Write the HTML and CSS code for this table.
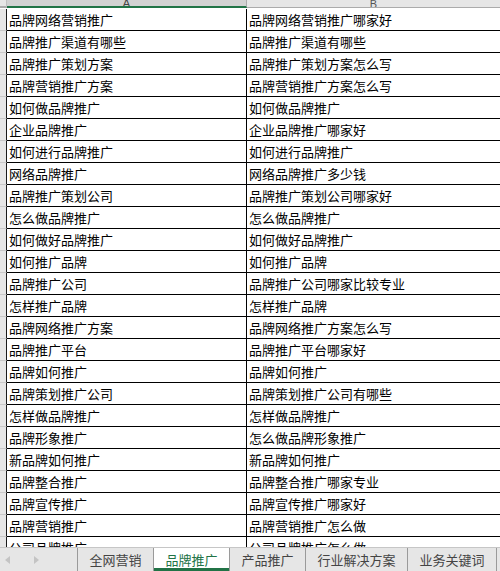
FILE: index.html
```html
<!DOCTYPE html>
<html lang="zh">
<head>
<meta charset="utf-8">
<title>品牌推广</title>
<link rel="stylesheet" href="styles.css">
</head>
<body>
<div class="sheet">
  <div class="colhead">
    <div class="corner"></div>
    <div class="ch ch-a"><span>A</span></div>
    <div class="ch ch-b"><span>B</span></div>
  </div>
  <div class="grid">
    <div class="row"><div class="rh"></div><div class="cell a">品牌网络营销推广</div><div class="cell b">品牌网络营销推广哪家好</div></div>
    <div class="row"><div class="rh"></div><div class="cell a">品牌推广渠道有哪些</div><div class="cell b">品牌推广渠道有哪些</div></div>
    <div class="row"><div class="rh"></div><div class="cell a">品牌推广策划方案</div><div class="cell b">品牌推广策划方案怎么写</div></div>
    <div class="row"><div class="rh"></div><div class="cell a">品牌营销推广方案</div><div class="cell b">品牌营销推广方案怎么写</div></div>
    <div class="row"><div class="rh"></div><div class="cell a">如何做品牌推广</div><div class="cell b">如何做品牌推广</div></div>
    <div class="row"><div class="rh"></div><div class="cell a">企业品牌推广</div><div class="cell b">企业品牌推广哪家好</div></div>
    <div class="row"><div class="rh"></div><div class="cell a">如何进行品牌推广</div><div class="cell b">如何进行品牌推广</div></div>
    <div class="row"><div class="rh"></div><div class="cell a">网络品牌推广</div><div class="cell b">网络品牌推广多少钱</div></div>
    <div class="row"><div class="rh"></div><div class="cell a">品牌推广策划公司</div><div class="cell b">品牌推广策划公司哪家好</div></div>
    <div class="row"><div class="rh"></div><div class="cell a">怎么做品牌推广</div><div class="cell b">怎么做品牌推广</div></div>
    <div class="row"><div class="rh"></div><div class="cell a">如何做好品牌推广</div><div class="cell b">如何做好品牌推广</div></div>
    <div class="row"><div class="rh"></div><div class="cell a">如何推广品牌</div><div class="cell b">如何推广品牌</div></div>
    <div class="row"><div class="rh"></div><div class="cell a">品牌推广公司</div><div class="cell b">品牌推广公司哪家比较专业</div></div>
    <div class="row"><div class="rh"></div><div class="cell a">怎样推广品牌</div><div class="cell b">怎样推广品牌</div></div>
    <div class="row"><div class="rh"></div><div class="cell a">品牌网络推广方案</div><div class="cell b">品牌网络推广方案怎么写</div></div>
    <div class="row"><div class="rh"></div><div class="cell a">品牌推广平台</div><div class="cell b">品牌推广平台哪家好</div></div>
    <div class="row"><div class="rh"></div><div class="cell a">品牌如何推广</div><div class="cell b">品牌如何推广</div></div>
    <div class="row"><div class="rh"></div><div class="cell a">品牌策划推广公司</div><div class="cell b">品牌策划推广公司有哪些</div></div>
    <div class="row"><div class="rh"></div><div class="cell a">怎样做品牌推广</div><div class="cell b">怎样做品牌推广</div></div>
    <div class="row"><div class="rh"></div><div class="cell a">品牌形象推广</div><div class="cell b">怎么做品牌形象推广</div></div>
    <div class="row"><div class="rh"></div><div class="cell a">新品牌如何推广</div><div class="cell b">新品牌如何推广</div></div>
    <div class="row"><div class="rh"></div><div class="cell a">品牌整合推广</div><div class="cell b">品牌整合推广哪家专业</div></div>
    <div class="row"><div class="rh"></div><div class="cell a">品牌宣传推广</div><div class="cell b">品牌宣传推广哪家好</div></div>
    <div class="row"><div class="rh"></div><div class="cell a">品牌营销推广</div><div class="cell b">品牌营销推广怎么做</div></div>
    <div class="row"><div class="rh"></div><div class="cell a">公司品牌推广</div><div class="cell b">公司品牌推广怎么做</div></div>
  </div>
  <div class="tabs">
    <div class="nav">
      <svg class="arrow" width="6" height="8" viewBox="0 0 6 8"><path d="M5 0 L0 4 L5 8 Z" fill="#c4c4c4"/></svg>
      <svg class="arrow" width="6" height="8" viewBox="0 0 6 8"><path d="M0 0 L5 4 L0 8 Z" fill="#c4c4c4"/></svg>
    </div>
    <div class="tab">全网营销</div>
    <div class="tab active">品牌推广</div>
    <div class="tab">产品推广</div>
    <div class="tab">行业解决方案</div>
    <div class="tab">业务关键词</div>
  </div>
</div>
</body>
</html>
```

FILE: styles.css
```css
html, body {
  margin: 0;
  padding: 0;
  width: 500px;
  height: 571px;
  overflow: hidden;
  background: #ffffff;
}

.sheet {
  display: flex;
  flex-direction: column;
  width: 500px;
  height: 571px;
  font-family: "Noto Sans CJK SC", "Noto Sans", sans-serif;
  font-size: 13px;
  color: #000;
}

.colhead {
  display: flex;
  height: 8px;
  flex: none;
}

.corner {
  width: 6px;
  background: #e6e6e6;
  border-right: 1px solid #c0c0c0;
  border-bottom: 2px solid #ababab;
  box-sizing: border-box;
  flex: none;
  width: 7px;
}

.ch {
  box-sizing: border-box;
  display: flex;
  justify-content: center;
  align-items: flex-end;
  overflow: hidden;
  font-family: "Liberation Sans", sans-serif;
  font-size: 11px;
  color: #444;
}

.ch span {
  line-height: 11px;
  margin-bottom: -3px;
}

.ch-a {
  width: 240px;
  flex: none;
  background: #d2d2d2;
  border-bottom: 2px solid #217346;
  border-right: 1px solid #ababab;
}

.ch-b {
  flex: 1;
  background: #e6e6e6;
  border-bottom: 1px solid #ababab;
  color: #555;
}

.grid {
  flex: 1;
  overflow: hidden;
  padding-top: 1px;
}

.row {
  display: flex;
  height: 22px;
  box-sizing: border-box;
}

.rh {
  width: 7px;
  flex: none;
  box-sizing: border-box;
  background: #e6e6e6;
  border-right: 1px solid #1a1a1a;
  border-bottom: 1px solid #c8c8c8;
}

.cell {
  box-sizing: border-box;
  height: 22px;
  line-height: 21px;
  padding-left: 2px;
  border-bottom: 1px solid #000;
  white-space: nowrap;
  overflow: hidden;
}

.cell.a {
  width: 240px;
  flex: none;
  border-right: 1px solid #000;
}

.cell.b {
  flex: 1;
}

.tabs {
  flex: none;
  height: 24px;
  display: flex;
  background: #e6e6e6;
  border-top: 1px solid #c6c6c6;
  box-sizing: border-box;
  color: #444;
  font-size: 13px;
  line-height: 23px;
}

.nav {
  width: 78px;
  flex: none;
  display: flex;
  align-items: center;
  gap: 23px;
  padding-left: 5px;
  box-sizing: border-box;
  border-right: 1px solid #9a9a9a;
}

.tab {
  padding: 0 11.5px;
  border-right: 1px solid #9a9a9a;
  white-space: nowrap;
}

.tab.active {
  background: #ffffff;
  color: #217346;
  border-left: 1px solid #9a9a9a;
  margin-left: -1px;
  box-shadow: inset 0 -3px 0 #217346;
}
```
